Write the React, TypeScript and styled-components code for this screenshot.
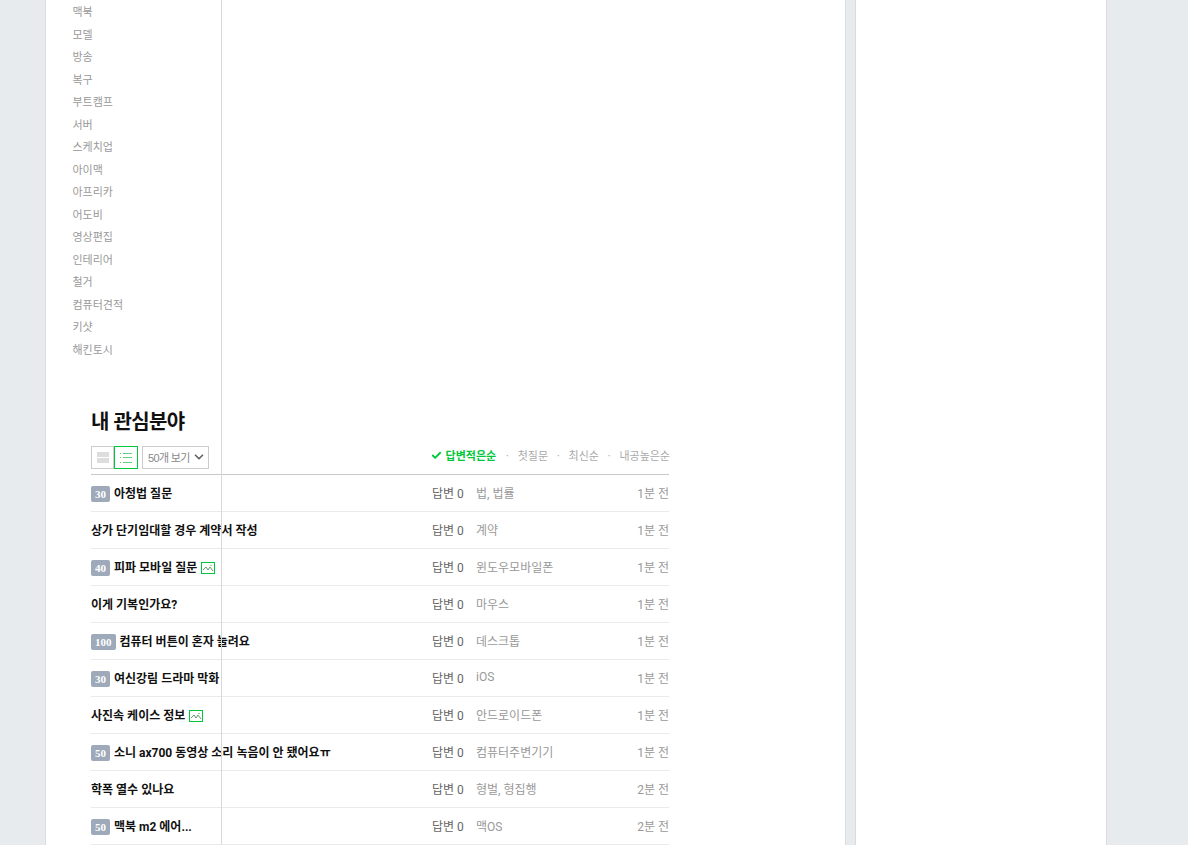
import { Check, ChevronDown } from "lucide-react";
import styled, { createGlobalStyle } from "styled-components";

const GlobalStyle = createGlobalStyle`
  html, body {
    margin: 0;
    padding: 0;
    height: 845px;
    overflow: hidden;
    background: #e8ebee;
    font-family: "Liberation Sans", "Noto Sans CJK KR", sans-serif;
  }
`;

const Page = styled.div`
  display: flex;
  align-items: stretch;
  gap: 9px;
  height: 845px;
  padding-left: 45px;
  overflow: hidden;
`;
const MainPanel = styled.main`
  position: relative;
  box-sizing: border-box;
  width: 801px;
  background: #fff;
  border-left: 1px solid #dadcdf;
  border-right: 1px solid #dadcdf;
`;
const SidePanel = styled.aside`
  box-sizing: border-box;
  width: 252px;
  background: #fff;
  border-left: 1px solid #dadcdf;
  border-right: 1px solid #dadcdf;
`;
const Divider = styled.div`
  position: absolute;
  top: 0;
  bottom: 0;
  left: 175px;
  width: 1px;
  background: #d8d8d8;
`;
const TagList = styled.ul`
  list-style: none;
  margin: 0;
  padding: 1px 0 0 26.5px;
  height: 393px;
`;
const TagItem = styled.li`
  height: 22.5px;
  line-height: 22.5px;
  font-size: 11px;
  color: #999;
`;
const Section = styled.section`
  padding: 0 176px 0 45px;
`;
const Heading = styled.h2`
  margin: 0;
  height: 52px;
  line-height: 56px;
  font-size: 20px;
  font-weight: 700;
  color: #111;
  letter-spacing: -0.7px;
`;
const Toolbar = styled.div`
  display: flex;
  align-items: center;
  height: 28px;
  border-bottom: 1px solid #c8c8c8;
`;
const ViewButton = styled.button<{ $active?: boolean }>`
  display: flex;
  align-items: center;
  justify-content: center;
  box-sizing: border-box;
  width: ${(p) => (p.$active ? "24px" : "23px")};
  height: 23px;
  margin: 0 0 5px 0;
  padding: 0;
  background: #fff;
  border: 1px solid ${(p) => (p.$active ? "#02c73c" : "#ccc")};
`;
const PageSize = styled.div`
  display: flex;
  align-items: center;
  box-sizing: border-box;
  width: 67px;
  height: 23px;
  margin: 0 0 5px 4px;
  padding: 0 0 2px 5px;
  border: 1px solid #ccc;
  font-size: 11px;
  letter-spacing: -0.65px;
  color: #888;
  white-space: nowrap;
  svg {
    margin-left: 2px;
  }
`;
const SortList = styled.div`
  display: flex;
  align-items: center;
  margin: 0 -1px 10px auto;
  font-size: 11px;
  color: #aaa;
`;
const SortItem = styled.span<{ $active?: boolean }>`
  display: flex;
  align-items: center;
  gap: 4px;
  margin-right: ${(p) => (p.$active ? "1px" : "0")};
  color: ${(p) => (p.$active ? "#02c73c" : "#aaa")};
  font-weight: ${(p) => (p.$active ? 700 : 400)};
`;
const SortDot = styled.span`
  width: 20.5px;
  text-align: center;
  color: #aaa;
`;
const Row = styled.div`
  display: flex;
  align-items: center;
  box-sizing: border-box;
  height: 37px;
  padding-bottom: 2px;
  border-bottom: 1px solid #eaeaea;
  font-family: Roboto, "Noto Sans CJK KR", sans-serif;
  font-size: 12px;
`;
const TitleCell = styled.div`
  display: flex;
  align-items: center;
  gap: 4px;
  width: 341px;
  flex-shrink: 0;
  font-weight: 700;
  color: #111;
  white-space: nowrap;
`;
const Badge = styled.span`
  display: inline-flex;
  align-items: center;
  justify-content: center;
  height: 16px;
  padding: 0 4px;
  margin-top: 3px;
  border-radius: 2px;
  background: #9ea9ba;
  color: #fff;
  font-family: "Liberation Serif", serif;
  font-size: 11px;
  font-weight: 700;
`;
const AnswerCell = styled.div`
  width: 44px;
  flex-shrink: 0;
  color: #666;
  white-space: nowrap;
`;
const TopicCell = styled.div`
  flex: 1;
  color: #999;
  white-space: nowrap;
`;
const TimeCell = styled.div`
  color: #999;
  white-space: nowrap;
`;
const PhotoSvg = styled.svg`
  margin-top: 3px;
`;

const tags = [
  "맥북", "모델", "방송", "복구", "부트캠프", "서버", "스케치업", "아이맥",
  "아프리카", "어도비", "영상편집", "인테리어", "철거", "컴퓨터견적", "키샷", "해킨토시",
];

const rows = [
  { badge: 30, title: "아청법 질문", topic: "법, 법률", time: "1분 전" },
  { title: "상가 단기임대할 경우 계약서 작성", topic: "계약", time: "1분 전" },
  { badge: 40, title: "피파 모바일 질문", photo: true, topic: "윈도우모바일폰", time: "1분 전" },
  { title: "이게 기복인가요?", topic: "마우스", time: "1분 전" },
  { badge: 100, title: "컴퓨터 버튼이 혼자 눌려요", topic: "데스크톱", time: "1분 전" },
  { badge: 30, title: "여신강림 드라마 막화", topic: "iOS", time: "1분 전" },
  { title: "사진속 케이스 정보", photo: true, topic: "안드로이드폰", time: "1분 전" },
  { badge: 50, title: "소니 ax700 동영상 소리 녹음이 안 됐어요ㅠ", topic: "컴퓨터주변기기", time: "1분 전" },
  { title: "학폭 열수 있나요", topic: "형벌, 형집행", time: "2분 전" },
  { badge: 50, title: "맥북 m2 에어...", topic: "맥OS", time: "2분 전" },
];

function PhotoIcon() {
  return (
    <PhotoSvg width="14" height="12" viewBox="0 0 14 12">
      <rect x="0.5" y="0.5" width="13" height="11" fill="#fff" stroke="#02c73c" />
      <path d="M2 8l3-3 2 3 2-3 3 4" fill="none" stroke="#5f9f72" strokeWidth="1" />
      <rect x="9" y="3" width="2" height="1" fill="#8ccf9f" />
    </PhotoSvg>
  );
}

function CardViewIcon() {
  return (
    <svg width="12" height="11" viewBox="0 0 12 11">
      <rect width="12" height="5" fill="#ddd" />
      <rect y="6" width="12" height="5" fill="#ddd" />
    </svg>
  );
}

function ListViewIcon() {
  return (
    <svg width="12" height="10" viewBox="0 0 12 10" fill="#5fd07f">
      <rect y="0" width="1" height="1" />
      <rect y="4" width="1" height="1" />
      <rect y="9" width="1" height="1" />
      <rect x="3" y="0" width="9" height="1" />
      <rect x="3" y="4" width="9" height="1" />
      <rect x="3" y="9" width="9" height="1" />
    </svg>
  );
}

export default function App() {
  return (
    <>
      <GlobalStyle />
      <Page>
        <MainPanel>
          <Divider />
          <TagList>
            {tags.map((tag) => (
              <TagItem key={tag}>{tag}</TagItem>
            ))}
          </TagList>
          <Section>
            <Heading>내 관심분야</Heading>
            <Toolbar>
              <ViewButton><CardViewIcon /></ViewButton>
              <ViewButton $active><ListViewIcon /></ViewButton>
              <PageSize>
                50개 보기
                <ChevronDown size={14} strokeWidth={3} color="#666" />
              </PageSize>
              <SortList>
                <SortItem $active>
                  <Check size={11} strokeWidth={4} />
                  답변적은순
                </SortItem>
                <SortDot>·</SortDot>
                <SortItem>첫질문</SortItem>
                <SortDot>·</SortDot>
                <SortItem>최신순</SortItem>
                <SortDot>·</SortDot>
                <SortItem>내공높은순</SortItem>
              </SortList>
            </Toolbar>
            {rows.map((row) => (
              <Row key={row.title}>
                <TitleCell>
                  {row.badge && <Badge>{row.badge}</Badge>}
                  {row.title}
                  {row.photo && <PhotoIcon />}
                </TitleCell>
                <AnswerCell>답변 0</AnswerCell>
                <TopicCell>{row.topic}</TopicCell>
                <TimeCell>{row.time}</TimeCell>
              </Row>
            ))}
          </Section>
        </MainPanel>
        <SidePanel />
      </Page>
    </>
  );
}
